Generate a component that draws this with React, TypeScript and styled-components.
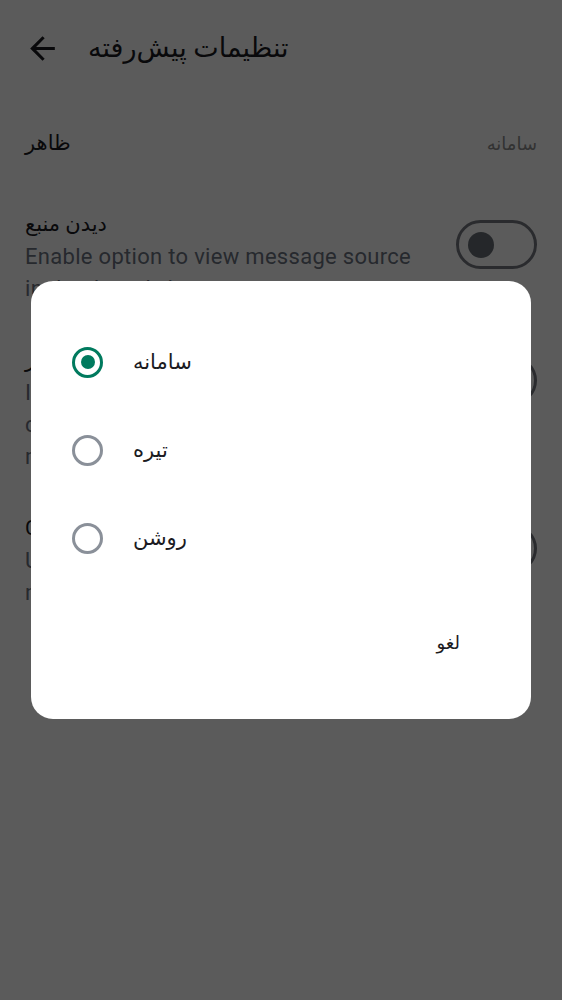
import React, { useState } from 'react';
import styled, { createGlobalStyle, css } from 'styled-components';

const GlobalStyle = createGlobalStyle`
  html, body {
    margin: 0;
    padding: 0;
    background: #fdfdfd;
  }
  body {
    font-family: Roboto, 'DejaVu Sans', sans-serif;
    color: #1b1b1f;
  }
`;

const Page = styled.div`
  min-height: 1000px;
  background: #fdfdfd;
  display: flex;
  flex-direction: column;
`;

const Header = styled.header`
  display: flex;
  align-items: center;
  height: 96px;
  padding: 0 24px;
  gap: 27px;
`;

const BackButton = styled.button`
  display: flex;
  align-items: center;
  justify-content: center;
  border: none;
  background: none;
  padding: 0;
  color: #1b1b1f;
  cursor: pointer;
`;

const Title = styled.h1`
  margin: 0;
  font-size: 27px;
  font-weight: 400;
  color: #1b1b1f;
`;

const List = styled.div`
  display: flex;
  flex-direction: column;
`;

const ValueRow = styled.div`
  display: flex;
  align-items: center;
  justify-content: space-between;
  height: 94px;
  padding: 0 25px;
`;

const RowLabel = styled.div`
  font-size: 21px;
  line-height: 34px;
  color: #1b1b1f;
`;

const RowValue = styled.div`
  font-size: 18px;
  color: #8c8c8c;
`;

const ToggleRow = styled.div`
  display: flex;
  align-items: flex-start;
  justify-content: space-between;
  gap: 24px;
  padding: 17px 25px 21px;
`;

const RowText = styled.div`
  display: flex;
  flex-direction: column;
`;

const Description = styled.div`
  font-size: 22px;
  letter-spacing: 0.3px;
  line-height: 32px;
  color: #6b7280;
  white-space: pre-line;
`;

const Switch = styled.div<{ on?: boolean }>`
  flex: none;
  box-sizing: border-box;
  width: 81px;
  height: 49px;
  margin-top: 13px;
  border: 3px solid #74777f;
  border-radius: 25px;
  display: flex;
  align-items: center;
  padding-left: 9px;
  ${(p) =>
    p.on &&
    css`
      justify-content: flex-end;
      padding: 0 9px 0 0;
      background: #007a5e;
      border-color: #007a5e;
    `}
`;

const Thumb = styled.span`
  width: 26px;
  height: 26px;
  border-radius: 50%;
  background: #676e75;
`;

const Scrim = styled.div`
  position: fixed;
  inset: 0;
  background: rgba(0, 0, 0, 0.64);
  display: flex;
  align-items: center;
  justify-content: center;
`;

const Dialog = styled.div`
  width: 500px;
  box-sizing: border-box;
  background: #ffffff;
  border-radius: 22px;
  padding: 37px 0 53px;
  display: flex;
  flex-direction: column;
`;

const Options = styled.div`
  display: flex;
  flex-direction: column;
`;

const OptionRow = styled.label`
  display: flex;
  align-items: center;
  gap: 30px;
  height: 88px;
  padding-left: 41px;
  cursor: pointer;
`;

const RadioCircle = styled.span<{ checked?: boolean }>`
  box-sizing: border-box;
  width: 31px;
  height: 31px;
  border-radius: 50%;
  border: 3px solid ${(p) => (p.checked ? '#007a5e' : '#8a9099')};
  display: flex;
  align-items: center;
  justify-content: center;
  &::after {
    content: '';
    width: 14px;
    height: 14px;
    border-radius: 50%;
    background: #007a5e;
    display: ${(p) => (p.checked ? 'block' : 'none')};
  }
`;

const OptionLabel = styled.span`
  font-size: 21px;
  color: #1b1b1f;
`;

const Actions = styled.div`
  display: flex;
  justify-content: flex-end;
  margin-top: 36px;
  padding-right: 47px;
`;

const TextButton = styled.button`
  height: 48px;
  padding: 0 24px;
  border: none;
  background: none;
  font-family: inherit;
  font-size: 18px;
  color: #1b1b1f;
  cursor: pointer;
`;

const ArrowBack = () => (
  <svg width="37" height="37" viewBox="0 0 24 24" fill="currentColor">
    <path d="M20 11H7.83l5.59-5.59L12 4l-8 8 8 8 1.41-1.41L7.83 13H20v-2z" />
  </svg>
);

const toggles = [
  {
    title: 'دیدن منبع',
    text: 'Enable option to view message source\nin the thread view',
  },
  {
    title: 'بارگیری خودکار',
    text: 'If enabled, images from remote servers\ncould be loaded automatically, which\nmay reveal your address to the sender',
  },
  {
    title: 'Compact mode',
    text: 'Use a denser layout for the thread list\nmaking room for more messages',
  },
];

const themes = ['سامانه', 'تیره', 'روشن'];

export default function App() {
  const [theme, setTheme] = useState(0);

  return (
    <>
      <GlobalStyle />
      <Page>
        <Header>
          <BackButton aria-label="back">
            <ArrowBack />
          </BackButton>
          <Title>تنظیمات پیش‌رفته</Title>
        </Header>
        <List>
          <ValueRow>
            <RowLabel>ظاهر</RowLabel>
            <RowValue>{themes[theme]}</RowValue>
          </ValueRow>
          {toggles.map((t, i) => (
            <ToggleRow key={i}>
              <RowText>
                <RowLabel>{t.title}</RowLabel>
                <Description>{t.text}</Description>
              </RowText>
              <Switch>
                <Thumb />
              </Switch>
            </ToggleRow>
          ))}
        </List>
      </Page>
      <Scrim>
        <Dialog>
          <Options>
            {themes.map((name, i) => (
              <OptionRow key={name} onClick={() => setTheme(i)}>
                <RadioCircle checked={theme === i} />
                <OptionLabel>{name}</OptionLabel>
              </OptionRow>
            ))}
          </Options>
          <Actions>
            <TextButton>لغو</TextButton>
          </Actions>
        </Dialog>
      </Scrim>
    </>
  );
}
